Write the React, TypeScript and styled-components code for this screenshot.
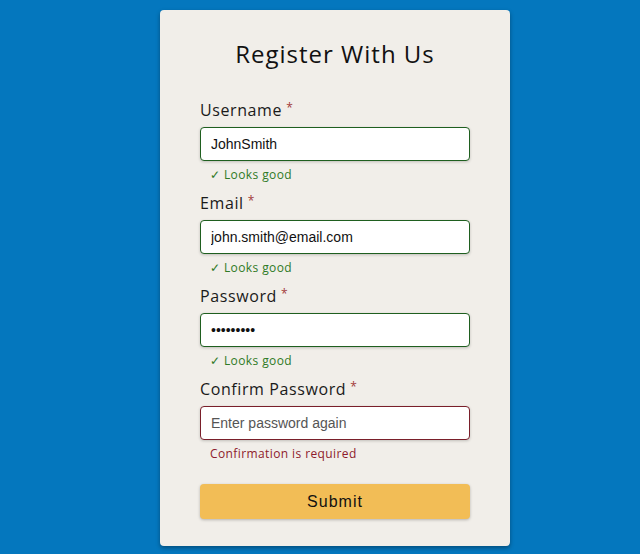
import React from "react";
import styled, { createGlobalStyle } from "styled-components";

const Global = createGlobalStyle`
  html, body { margin: 0; padding: 0; }
  body { background: #0477be; font-family: "Open Sans", "DejaVu Sans", sans-serif; }
`;

const Page = styled.div`
  width: 640px;
  height: 554px;
  display: flex;
  justify-content: center;
  padding: 10px 0 0 30px;
  box-sizing: border-box;
`;

const Card = styled.form`
  width: 350px;
  height: 536px;
  box-sizing: border-box;
  background: #f1eee9;
  border-radius: 4px;
  box-shadow: 0 2px 4px rgba(0, 0, 0, 0.35);
  padding: 28px 40px 27px;
  display: flex;
  flex-direction: column;
`;

const Title = styled.h1`
  margin: 0 0 30px;
  font-family: "Open Sans", sans-serif;
  font-weight: 400;
  font-size: 24px;
  line-height: 32px;
  text-align: center;
  color: #111;
  letter-spacing: 1px;
`;

const Field = styled.div`
  display: flex;
  flex-direction: column;
  margin-bottom: 10px;
`;

const Label = styled.label`
  font-family: "Open Sans", sans-serif;
  font-size: 16px;
  line-height: 20px;
  color: #1a1a1a;
  margin-bottom: 7px;
  letter-spacing: 0.6px;
`;

const Star = styled.sup`
  color: #a33a3a;
  font-size: 12px;
  margin-left: 4px;
  vertical-align: 4px;
  line-height: 0;
`;

const Input = styled.input<{ $valid: boolean }>`
  box-sizing: border-box;
  width: 270px;
  height: 34px;
  padding: 0 10px;
  border: 1px solid ${(p) => (p.$valid ? "#1f5f1f" : "#7a1f2a")};
  border-radius: 4px;
  background: #fff;
  box-shadow: 0 1px 3px rgba(0, 0, 0, 0.2);
  font-family: "Liberation Sans", Arial, sans-serif;
  font-size: 14px;
  color: #111;
  outline: none;
  &::placeholder { color: #555; }
`;

const Message = styled.div<{ $valid: boolean }>`
  margin-top: 6px;
  padding-left: 10px;
  height: 16px;
  font-family: "Open Sans", sans-serif;
  font-size: 12px;
  line-height: 16px;
  color: ${(p) => (p.$valid ? "#2f7a26" : "#8e1b2c")};
  letter-spacing: 0.4px;
`;

const Submit = styled.button`
  margin-top: 12px;
  width: 270px;
  height: 36px;
  border: none;
  border-radius: 4px;
  background: #f2bd56;
  box-shadow: 0 1px 3px rgba(0, 0, 0, 0.25);
  font-family: "Liberation Sans", Arial, sans-serif;
  font-size: 16px;
  letter-spacing: 1px;
  color: #111;
  cursor: pointer;
`;

type F = { label: string; value?: string; placeholder?: string; type?: string; valid: boolean; msg: string };

const fields: F[] = [
  { label: "Username", value: "JohnSmith", valid: true, msg: "\u2713 Looks good" },
  { label: "Email", value: "john.smith@email.com", valid: true, msg: "\u2713 Looks good" },
  { label: "Password", value: "123456789", type: "password", valid: true, msg: "\u2713 Looks good" },
  { label: "Confirm Password", placeholder: "Enter password again", type: "password", valid: false, msg: "Confirmation is required" },
];

export default function App() {
  return (
    <>
      <Global />
      <Page>
        <Card onSubmit={(e) => e.preventDefault()}>
          <Title>Register With Us</Title>
          {fields.map((f) => (
            <Field key={f.label}>
              <Label>
                {f.label}
                <Star>*</Star>
              </Label>
              <Input
                $valid={f.valid}
                type={f.type || "text"}
                defaultValue={f.value}
                placeholder={f.placeholder}
              />
              <Message $valid={f.valid}>{f.msg}</Message>
            </Field>
          ))}
          <Submit type="submit">Submit</Submit>
        </Card>
      </Page>
    </>
  );
}
